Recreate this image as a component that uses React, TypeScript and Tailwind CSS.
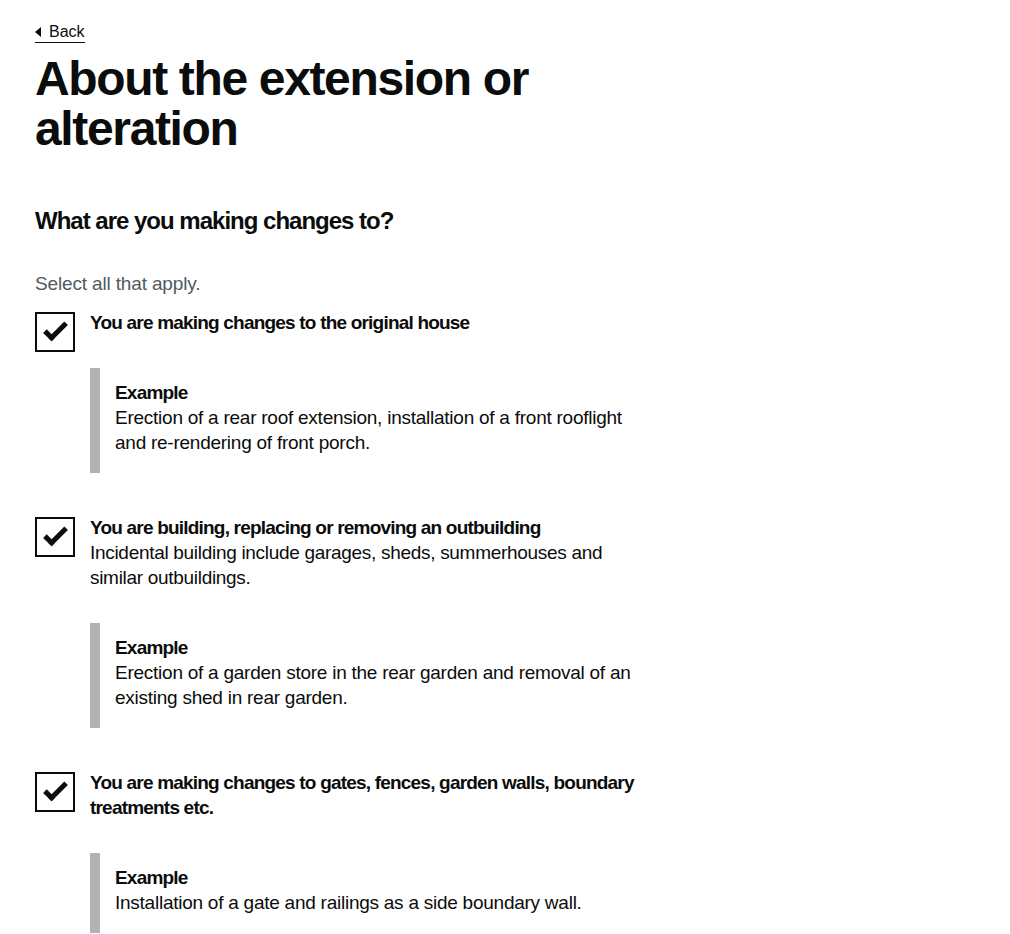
import React from "react";

type Item = {
  label: string;
  hint?: string;
  example: string;
};

const items: Item[] = [
  {
    label: "You are making changes to the original house",
    example:
      "Erection of a rear roof extension, installation of a front rooflight and re-rendering of front porch.",
  },
  {
    label: "You are building, replacing or removing an outbuilding",
    hint: "Incidental building include garages, sheds, summerhouses and similar outbuildings.",
    example:
      "Erection of a garden store in the rear garden and removal of an existing shed in rear garden.",
  },
  {
    label:
      "You are making changes to gates, fences, garden walls, boundary treatments etc.",
    example: "Installation of a gate and railings as a side boundary wall.",
  },
];

const Checkbox = () => (
  <div className="relative mt-[2px] w-[40px] h-[40px] shrink-0 border-2 border-[#0b0c0c] bg-white">
    <span className="absolute top-[9px] left-[7px] w-[23px] h-[12px] border-l-[5px] border-b-[5px] border-[#0b0c0c] -rotate-45" />
  </div>
);

const CheckItem = ({ item, first }: { item: Item; first: boolean }) => (
  <div className={first ? "flex items-start" : "flex items-start mt-[42px]"}>
    <Checkbox />
    <div className="flex-1 pl-[15px]">
      <div className="pr-[15px] text-[19px] leading-[25px] font-bold tracking-[-0.8px]">
        {item.label}
      </div>
      {item.hint && (
        <div className="pr-[15px] text-[19px] leading-[25px] tracking-[-0.3px]">
          {item.hint}
        </div>
      )}

      {/* Example inset */}
      <div className="mt-[33px] border-l-[10px] border-[#b1b4b6] pl-[15px] pr-[15px] pt-[12px] pb-[18px] text-[19px] leading-[25px]">
        <div className="font-bold tracking-[-0.8px]">Example</div>
        <div className="tracking-[-0.25px]">{item.example}</div>
      </div>
    </div>
  </div>
);

export default function App() {
  return (
    <div
      className="min-h-screen bg-white text-[#0b0c0c]"
      style={{ fontFamily: '"Liberation Sans", Arial, sans-serif' }}
    >
      <div className="ml-[35px] w-[627px] pt-[20px]">
        <a
          href="#"
          className="relative inline-block pl-[14px] text-[16px] leading-[20px] border-b border-[#0b0c0c] text-[#0b0c0c]"
        >
          <svg
            className="absolute left-0 top-[5px]"
            width="6"
            height="10"
            viewBox="0 0 6 10"
          >
            <path d="M6 0 L0 5 L6 10 Z" fill="#0b0c0c" />
          </svg>
          Back
        </a>

        <h1 className="mt-[10px] text-[48px] leading-[50px] font-bold tracking-[-1.35px]">
          About the extension or
          <br />
          alteration
        </h1>

        <div className="mt-[52px]">
          <div className="text-[24px] leading-[30px] font-bold tracking-[-1px]">
            What are you making changes to?
          </div>
          <div className="mt-[35px] text-[19px] leading-[25px] text-[#505a5f] tracking-[-0.15px]">
            Select all that apply.
          </div>

          <div className="mt-[14px]">
            {items.map((item, i) => (
              <CheckItem key={i} item={item} first={i === 0} />
            ))}
          </div>
        </div>
      </div>
    </div>
  );
}
